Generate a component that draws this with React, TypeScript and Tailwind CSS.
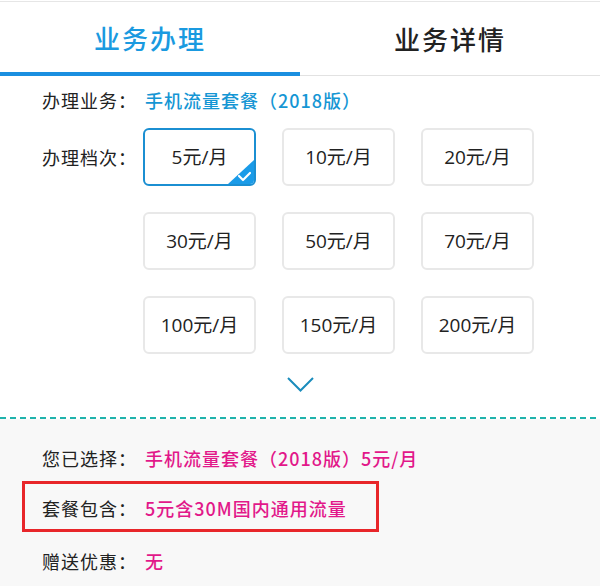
const plans = ["5元/月", "10元/月", "20元/月", "30元/月", "50元/月", "70元/月", "100元/月", "150元/月", "200元/月"];

const cjk = "font-['Noto_Sans_CJK_SC',sans-serif]";

function Row({ label, value, tone }: { label: string; value: string; tone: string }) {
  return (
    <div className="flex items-center text-[18px] tracking-[1px]">
      <span className="w-[103px] shrink-0 text-[#222]">{label}</span>
      <span className={`font-medium ${tone}`}>{value}</span>
    </div>
  );
}

export default function App() {
  const selected = 0;

  return (
    <div className={`h-[586px] w-[600px] overflow-hidden bg-white ${cjk}`}>
      {/* tabs */}
      <div className="mt-px flex h-[75px] border-t border-[#e6e6e6]">
        <div className="flex flex-1 items-center justify-center border-b-4 border-[#1a8fe0] text-[26px] font-medium tracking-[2px] text-[#1a9ae0]">
          业务办理
        </div>
        <div className="flex flex-1 items-center justify-center border-b border-[#e2e2e2] text-[26px] font-medium tracking-[2px] text-[#222]">
          业务详情
        </div>
      </div>

      <div className="pl-[42px]">
        <div className="mt-[4px] flex h-[40px] items-center">
          <Row label="办理业务：" value="手机流量套餐（2018版）" tone="text-[#1596d4]" />
        </div>

        <div className="mt-[8px] flex">
          <div className="flex h-[58px] w-[101px] shrink-0 items-center text-[18px] tracking-[1px] text-[#222]">
            办理档次：
          </div>
          <div className="grid grid-cols-[113px_113px_113px] gap-x-[26px] gap-y-[26px]">
            {plans.map((p, i) => (
              <div
                key={p}
                className={`relative flex h-[58px] items-center justify-center overflow-hidden rounded-md bg-white font-['Open_Sans','Noto_Sans_CJK_SC',sans-serif] text-[19px] text-[#222] ${
                  i === selected ? "border-2 border-[#1b8fd2]" : "border-2 border-[#e8e8e8]"
                }`}
              >
                {p}
                {i === selected && (
                  <svg className="absolute bottom-0 right-0" width="26" height="24" viewBox="0 0 26 24">
                    <path d="M26 0 L26 24 L0 24 Z" fill="#1a9be8" />
                    <path d="M11 16 L15 20 L22 13" fill="none" stroke="#fff" strokeWidth="2.2" strokeLinecap="round" strokeLinejoin="round" />
                  </svg>
                )}
              </div>
            ))}
          </div>
        </div>
      </div>

      <div className="mt-[23px] flex h-[15px] justify-center">
        <svg width="27" height="15" viewBox="0 0 27 15">
          <path d="M1 1 L13.5 13.5 L26 1" fill="none" stroke="#1a8cbc" strokeWidth="2" />
        </svg>
      </div>

      <div className="mt-[25px] h-[2px] bg-[linear-gradient(to_right,#1fb3ac_65%,transparent_0)] bg-[length:10px_2px]" />

      <div className="h-[200px] bg-[#f8f8f8] pt-[16px]">
        <div className="flex h-[46px] items-center pl-[42px]">
          <Row label="您已选择：" value="手机流量套餐（2018版）5元/月" tone="text-[#e2188a]" />
        </div>
        <div className="ml-[22px] flex h-[51px] w-[357px] items-center border-[3px] border-[#e8262a] pl-[17px] pt-[4px]">
          <Row label="套餐包含：" value="5元含30M国内通用流量" tone="text-[#e2188a]" />
        </div>
        <div className="flex h-[58px] items-center pl-[42px]">
          <Row label="赠送优惠：" value="无" tone="text-[#e2188a]" />
        </div>
      </div>
    </div>
  );
}
